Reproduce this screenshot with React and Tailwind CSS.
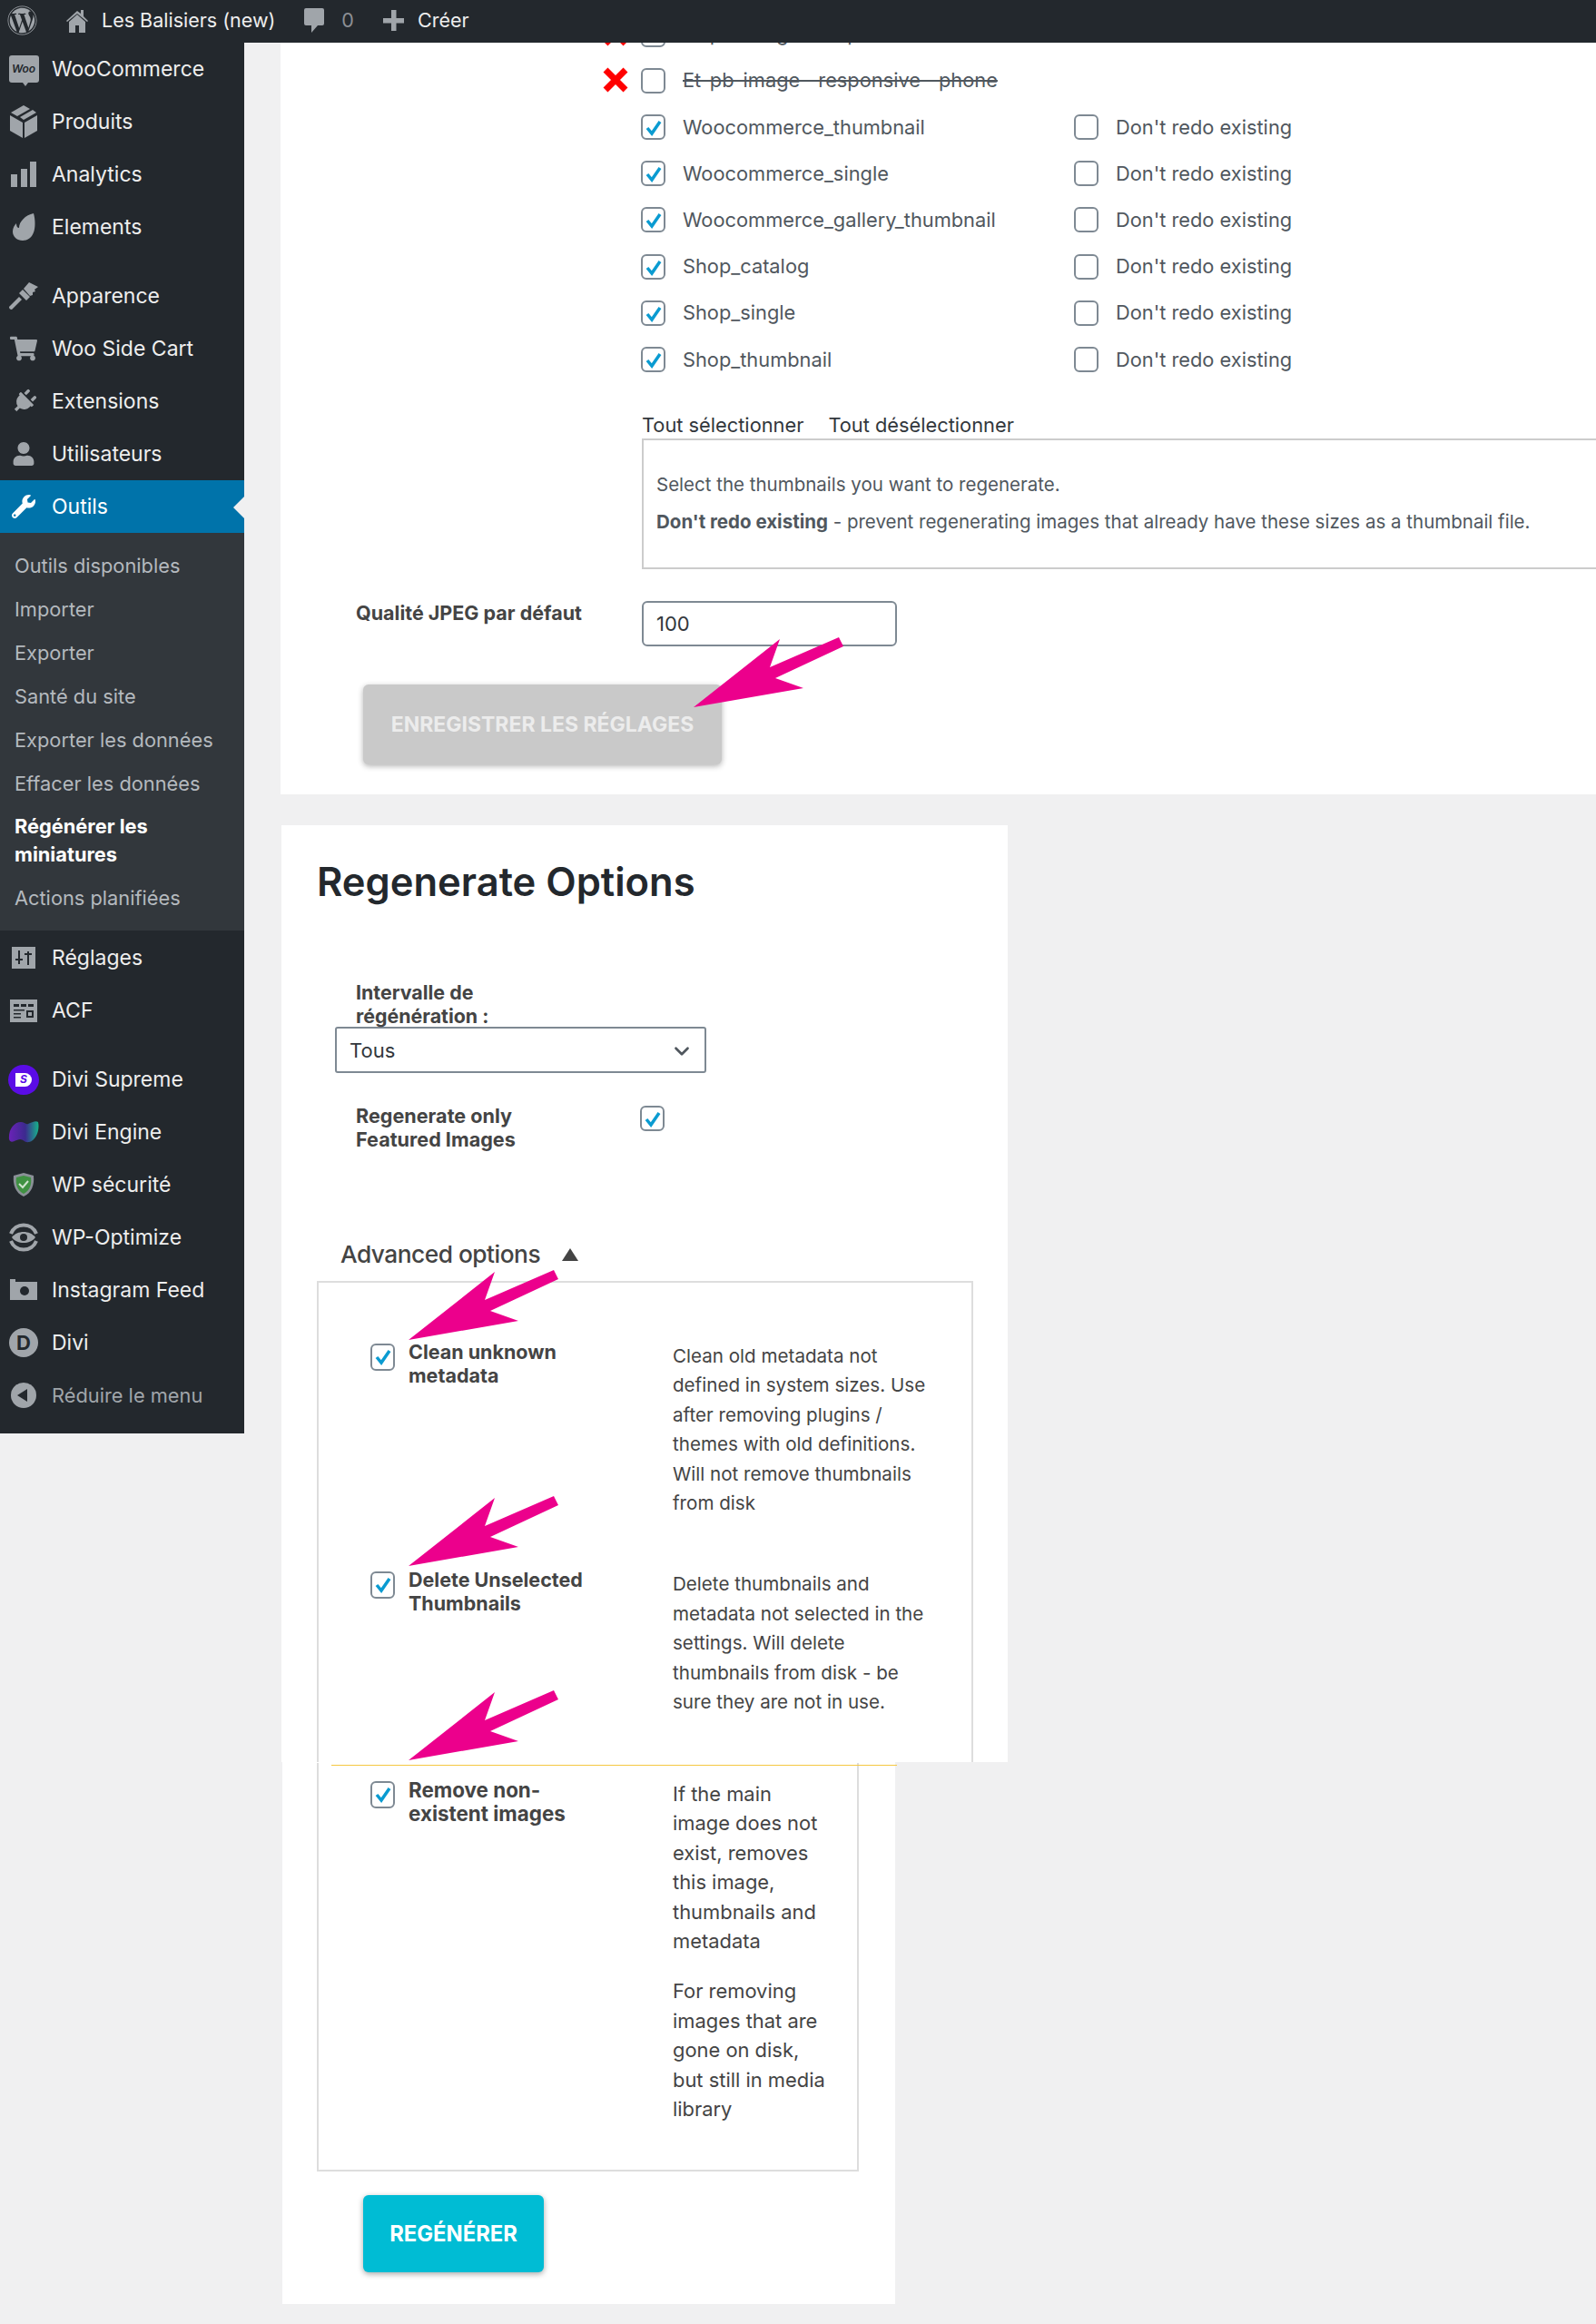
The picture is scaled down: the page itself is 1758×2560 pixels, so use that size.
import { Fragment } from 'react';
import { FaWordpress, FaWrench, FaPlug, FaUser, FaShoppingCart } from 'react-icons/fa';
import { ChevronDown } from 'lucide-react';

const Bars = () => (
  <svg width="28" height="30" viewBox="0 0 28 30" fill="#a0a5aa"><rect x="0" y="15" width="7" height="14" /><rect x="11" y="9" width="7" height="20" /><rect x="21" y="1" width="7" height="28" /></svg>
);

const BoxIcon = () => (
  <svg width="30" height="36" viewBox="0 0 30 36" fill="#a0a5aa">
    <polygon points="0,11 14,19 14,36 0,28" />
    <polygon points="30,11 16,19 16,36 30,28" />
    <polygon points="15,0 22,4 8,12 1,8" />
    <polygon points="25,5 29,8 15,16 11,13" />
  </svg>
);

const Flame = () => (
  <svg width="26" height="30" viewBox="0 0 26 30" fill="#a0a5aa"><path d="M24 0c2 7 2 16 0 21-2 6-7 9-12 9C6 30 1 26 1 20c0-4 2-7 4-9 0 3 1 5 3 5C8 9 15 2 24 0z" /></svg>
);

const Brush = () => (
  <svg width="32" height="30" viewBox="0 0 32 30" fill="#a0a5aa"><path d="M0 27l11-11 3 3L3 30c-2 0-3-1-3-3z" /><path d="M11 12l4-4 8 8-4 4z" /><path d="M16 7l6-7 10 5-4 3 1 2-3 1 0 3-3 1z" /></svg>
);

const Sliders = () => (
  <svg width="26" height="24" viewBox="0 0 26 24"><rect width="26" height="24" fill="#a0a5aa" /><path d="M8 4v15M4 14h8M18 5v15M14 8h8" stroke="#23282d" strokeWidth="2" /></svg>
);

const AcfIcon = () => (
  <svg width="30" height="25" viewBox="0 0 30 25"><rect width="30" height="25" fill="#a0a5aa" /><path d="M4 5h6v3H4zM12 5h6v3h-6zM20 5h6v3h-6zM4 11h12v1.500H4zM4 15h8v1.500H4zM4 19h8v1.500H4zM18 12h8v8h-8z" fill="#23282d" /><rect x="20" y="14" width="4" height="4" fill="#a0a5aa" /></svg>
);

const DiviSupreme = () => (
  <div className="w-[34px] h-[33px] rounded-full bg-[#5a0ce6] flex items-center justify-center">
    <div className="w-[18px] h-[15px] bg-white rounded-r-full flex items-center justify-center text-[#5a0ce6] text-[12px] font-bold italic leading-none">S</div>
  </div>
);

const DiviEngine = () => (
  <svg width="34" height="24" viewBox="0 0 34 24">
    <defs>
      <linearGradient id="engine" x1="0" x2="1" y1="0" y2="0">
        <stop offset="0" stopColor="#6a22b8" />
        <stop offset="0.55" stopColor="#3c2a8e" />
        <stop offset="1" stopColor="#17b38a" />
      </linearGradient>
    </defs>
    <path d="M1 20C0 10 6 1 14 1c4 0 5 3 8 2 4-2 9-4 11-2 2 8-2 20-10 22-5 1-6-3-10-3-4 0-10 6-12 0z" fill="url(#engine)" />
  </svg>
);

const Shield = () => (
  <svg width="24" height="26" viewBox="0 0 24 26"><path d="M12 0l11 3c1 10-2 19-11 23C3 22 0 13 1 3z" fill="#8a9097" /><path d="M12 3l8 2c1 8-1 14-8 18C5 19 3 13 4 5z" fill="#3f9142" /><path d="M7 12l4 4 6-7" fill="none" stroke="#cfe3cf" strokeWidth="2" /></svg>
);

const Optimize = () => (
  <svg width="34" height="34" viewBox="0 0 34 34" fill="none" stroke="#a0a5aa" strokeWidth="4">
    <path d="M3 13A15 15 0 0 1 31 13" />
    <path d="M3 21A15 15 0 0 0 31 21" />
    <path d="M4 17C10 9 24 9 30 17C24 25 10 25 4 17z" fill="#a0a5aa" stroke="none" />
    <circle cx="17" cy="17" r="4" fill="#23282d" stroke="none" />
  </svg>
);

const Camera = () => (
  <svg width="30" height="24" viewBox="0 0 30 24"><path d="M0 0h6v3h24v20H0z" fill="#a0a5aa" /><rect x="7" y="0" width="3" height="3" fill="#23282d" /><circle cx="16" cy="13" r="5" fill="#23282d" /></svg>
);

const DiviLogo = () => (
  <div className="w-[32px] h-[32px] rounded-full bg-[#a0a5aa] flex items-center justify-center text-[#23282d] text-[22px] font-bold leading-none">D</div>
);

const Collapse = () => (
  <svg width="28" height="28" viewBox="0 0 28 28"><circle cx="14" cy="14" r="14" fill="#a0a5aa" /><polygon points="7,14 18,7 18,21" fill="#23282d" /></svg>
);

const Home = () => (
  <svg width="26" height="27" viewBox="0 0 26 27" fill="#a0a5aa"><path d="M13 3L1 14l1 1L13 6l11 9 1-1-5-5V2h-3v4z" /><path d="M4 15l9-8 9 8v12h-7v-8h-4v8H4z" /></svg>
);

const Comment = () => (
  <svg width="24" height="29" viewBox="0 0 24 29" fill="#a0a5aa"><path d="M3 1h18a2 2 0 0 1 2 2v15a2 2 0 0 1-2 2h-5l-7 8v-8H3a2 2 0 0 1-2-2V3a2 2 0 0 1 2-2z" /></svg>
);

const Plus = () => (
  <svg width="23" height="23" viewBox="0 0 23 23" fill="#a0a5aa"><rect x="9" y="0" width="5.500" height="23" /><rect x="0" y="9" width="23" height="5.500" /></svg>
);

const WooIcon = () => (
  <div className="relative w-[33px] h-[30px] rounded-[3px] bg-[#a0a5aa] flex items-center justify-center text-[#23282d] text-[12px] italic font-semibold leading-none">
    Woo
    <div className="absolute -bottom-[4px] left-[15px] w-0 h-0 border-x-[3px] border-t-[4px] border-x-transparent border-t-[#a0a5aa]" />
  </div>
);

const topMenu1 = [
  { label: 'WooCommerce', icon: <WooIcon /> },
  { label: 'Produits', icon: <BoxIcon /> },
  { label: 'Analytics', icon: <Bars /> },
  { label: 'Elements', icon: <Flame /> },
];
const topMenu2 = [
  { label: 'Apparence', icon: <Brush /> },
  { label: 'Woo Side Cart', icon: <FaShoppingCart size={30} color="#a0a5aa" /> },
  { label: 'Extensions', icon: <FaPlug size={27} color="#a0a5aa" className="rotate-45" /> },
  { label: 'Utilisateurs', icon: <FaUser size={26} color="#a0a5aa" /> },
];
const submenu = ['Outils disponibles', 'Importer', 'Exporter', 'Santé du site', 'Exporter les données', 'Effacer les données'];
const topMenu3 = [
  { label: 'Réglages', icon: <Sliders /> },
  { label: 'ACF', icon: <AcfIcon /> },
];
const topMenu4 = [
  { label: 'Divi Supreme', icon: <DiviSupreme /> },
  { label: 'Divi Engine', icon: <DiviEngine /> },
  { label: 'WP sécurité', icon: <Shield /> },
  { label: 'WP-Optimize', icon: <Optimize /> },
  { label: 'Instagram Feed', icon: <Camera /> },
  { label: 'Divi', icon: <DiviLogo /> },
];

const sizes = ['Woocommerce_thumbnail', 'Woocommerce_single', 'Woocommerce_gallery_thumbnail', 'Shop_catalog', 'Shop_single', 'Shop_thumbnail'];

const MenuRow = ({ item }) => (
  <div className="h-[58px] flex items-center text-[#eeeeee] text-[23px]">
    <div className="w-[52px] mr-[5px] flex justify-center">{item.icon}</div>
    <span>{item.label}</span>
  </div>
);

const Check = ({ checked = true, className = 'w-[27px] h-[28px]' }) => (
  <div className={`relative shrink-0 rounded-md border-2 border-[#7e8993] bg-white ${className}`}>
    {checked && (
      <svg className="absolute left-[3px] top-[4px]" width="18" height="18" viewBox="0 0 18 18" fill="none">
        <path d="M2 9l5 6L16 2" stroke="#0a9bd1" strokeWidth="3.500" />
      </svg>
    )}
  </div>
);

const RedX = ({ className }) => (
  <svg className={className} width="28" height="28" viewBox="0 0 28 28" fill="none">
    <path d="M3 3l22 22M25 3L3 25" stroke="#ff0000" strokeWidth="7" />
  </svg>
);

const Arrow = ({ className }) => (
  <svg className={`absolute ${className}`} width="165" height="77" viewBox="0 0 165 77" fill="#ec008c">
    <polygon points="0,77 95,2 84,33 160,0 165,10 90,45 121,56" />
  </svg>
);

const Lines = ({ lines }) => lines.map((line) => (
  <Fragment key={line}>{line}<br /></Fragment>
));

const Option = ({ title, desc, className = '', titleSize = 'text-[21.500px]', descSize = 'text-[20.600px]' }) => (
  <div className={`flex text-[#444444] ${className}`}>
    <Check className="w-[27px] h-[30px] mt-[3px]" />
    <div className={`w-[306px] shrink-0 pl-[15px] font-bold leading-[25.500px] ${titleSize}`}><Lines lines={title} /></div>
    <div className={`pt-px whitespace-nowrap leading-[32.400px] ${descSize}`}>{desc}</div>
  </div>
);

export default function App() {
  return (
    <div className="min-h-[2560px] bg-[#f0f0f1] [font-family:Inter,sans-serif] antialiased">
      {/* Admin bar */}
      <div className="h-[47px] pb-[2px] bg-[#23282d] flex items-center text-[#eeeeee] text-[21.500px]">
        <FaWordpress size={33} color="#a0a5aa" className="ml-[8px]" />
        <div className="ml-[31px]"><Home /></div>
        <span className="ml-[14px]">Les Balisiers (new)</span>
        <div className="ml-[31px]"><Comment /></div>
        <span className="ml-[18px] text-[#8c8f94]">0</span>
        <div className="ml-[32px]"><Plus /></div>
        <span className="ml-[15px]">Créer</span>
      </div>

      <div className="flex items-start">
        {/* Sidebar */}
        <div className="w-[269px] shrink-0 bg-[#23282d] pb-[13px]">
          {topMenu1.map((item) => <MenuRow key={item.label} item={item} />)}
          <div className="h-[18px]" />
          {topMenu2.map((item) => <MenuRow key={item.label} item={item} />)}
          <div className="relative h-[58px] bg-[#0073aa] flex items-center text-white text-[23px]">
            <div className="w-[52px] mr-[5px] flex justify-center"><FaWrench size={26} color="#ffffff" /></div>
            <span>Outils</span>
            <div className="absolute right-0 top-[18px] w-0 h-0 border-y-[12px] border-r-[12px] border-y-transparent border-r-[#f0f0f1]" />
          </div>
          <div className="bg-[#32373c] py-[12px] text-[#b4b9be] text-[21.800px]">
            {submenu.map((label) => (
              <div key={label} className="h-[48px] flex items-center pl-[16px]">{label}</div>
            ))}
            <div className="pl-[16px] pr-[20px] py-[8px] font-bold text-white leading-[31px]">Régénérer les miniatures</div>
            <div className="h-[48px] flex items-center pl-[16px]">Actions planifiées</div>
          </div>
          <div className="h-px" />
          {topMenu3.map((item) => <MenuRow key={item.label} item={item} />)}
          <div className="h-[18px]" />
          {topMenu4.map((item) => <MenuRow key={item.label} item={item} />)}
          <div className="h-[58px] flex items-center text-[#a0a5aa] text-[21.800px]">
            <div className="w-[52px] mr-[5px] flex justify-center"><Collapse /></div>
            <span>Réduire le menu</span>
          </div>
        </div>

        {/* Main column */}
        <div className="flex-1 min-w-0 pl-[40px]">
          {/* Thumbnail settings */}
          <div className="relative h-[828px] bg-white overflow-hidden">
            <div className="relative ml-[397px] -mt-[35px]">
              {['Et-pb-image--responsive--tablet', 'Et-pb-image--responsive--phone'].map((label) => (
                <div key={label} className="relative h-[51.200px] flex items-center">
                  <RedX className="absolute -left-[42px] top-[11px]" />
                  <Check checked={false} />
                  <span className="ml-[19px] line-through text-[#50575e] text-[21.800px]">{label}</span>
                </div>
              ))}
              {sizes.map((label) => (
                <div key={label} className="h-[51.200px] flex items-center text-[#50575e] text-[21.800px]">
                  <Check />
                  <span className="ml-[19px] w-[431px]">{label}</span>
                  <Check checked={false} />
                  <span className="ml-[19px]">Don't redo existing</span>
                </div>
              ))}
            </div>

            <div className="ml-[398px] mt-[31px] flex text-[#32373c] text-[21.800px] leading-[30px]">
              <span>Tout sélectionner</span>
              <span className="ml-[27px]">Tout désélectionner</span>
            </div>
            <div className="ml-[398px] h-[144px] border-2 border-r-0 border-[#cccccc] pl-[14px] pt-[34px] text-[#50575e] text-[20.500px] leading-[30px]">
              <p>Select the thumbnails you want to regenerate.</p>
              <p className="mt-[11px]"><b>Don't redo existing</b> - prevent regenerating images that already have these sizes as a thumbnail file.</p>
            </div>

            <div className="mt-[35px] flex items-start">
              <div className="ml-[83px] w-[315px] font-bold text-[#444444] text-[21.500px] leading-[26px]">Qualité JPEG par défaut</div>
              <div className="w-[281px] h-[50px] pt-[2px] rounded-md border-2 border-[#7e8993] flex items-center pl-[14px] text-[#32373c] text-[22px]">100</div>
            </div>

            <div className="ml-[91px] mt-[42px] w-[395px] h-[88px] pt-[2px] rounded-md bg-[#c9c9c9] shadow-[0_2px_6px_rgba(0,0,0,0.3)] flex items-center justify-center font-bold text-[#ececec] text-[23px]">
              ENREGISTRER LES RÉGLAGES
            </div>

            <Arrow className="left-[455px] top-[655px]" />
          </div>

          {/* Regenerate options */}
          <div className="relative ml-px mt-[34px] w-[800px] h-[1032px] bg-white">
            <h2 className="pt-[34px] ml-[39px] font-semibold text-[#23282d] text-[43.500px] leading-[56px]">Regenerate Options</h2>

            <div className="ml-[82px] mt-[81px] w-[210px] font-bold text-[#444444] text-[21.400px] leading-[26px]">Intervalle de régénération :</div>
            <div className="ml-[59px] -mt-px w-[409px] h-[51px] pt-[2px] rounded-[3px] border-2 border-[#7e8993] flex items-center justify-between pl-[14px] pr-[12px] text-[#32373c] text-[22px]">
              Tous
              <ChevronDown size={26} strokeWidth={2.500} color="#50575e" />
            </div>

            <div className="mt-[34px] flex items-start">
              <div className="ml-[82px] w-[313px] font-bold text-[#444444] text-[21.600px] leading-[26px]">Regenerate only<br />Featured Images</div>
              <Check className="w-[27px] h-[28px] mt-[2px]" />
            </div>

            <div className="ml-[65px] mt-[96px] flex items-center text-[#444444] text-[26.300px] leading-[36px] font-medium tracking-[-0.5px]">
              Advanced options
              <div className="ml-[24px] w-0 h-0 border-x-[9px] border-b-[14px] border-x-transparent border-b-[#444444]" />
            </div>

            <div className="ml-[39px] mt-[11px] w-[723px] h-[530px] border-2 border-b-0 border-[#dddddd] pl-[57px] pt-[64px]">
              <Option
                title={['Clean unknown', 'metadata']}
                desc={<Lines lines={['Clean old metadata not', 'defined in system sizes. Use', 'after removing plugins /', 'themes with old definitions.', 'Will not remove thumbnails', 'from disk']} />}
              />
              <Option
                className="mt-[56px]"
                title={['Delete Unselected', 'Thumbnails']}
                desc={<Lines lines={['Delete thumbnails and', 'metadata not selected in the', 'settings. Will delete', 'thumbnails from disk - be', 'sure they are not in use.']} />}
              />
            </div>

            <Arrow className="left-[140px] top-[490px]" />
            <Arrow className="left-[140px] top-[739px]" />
            <Arrow className="left-[140px] top-[953px]" />
          </div>

          {/* Continuation of the options panel */}
          <div className="relative ml-[2px] w-[675px] h-[597px] bg-white pt-px">
            <div className="absolute left-[54px] top-[3px] w-[623px] h-[1px] bg-[#f5c842]" />
            <div className="ml-[38px] w-[597px] h-[450px] border-2 border-t-0 border-[#dddddd] pl-[57px] pt-[17px]">
              <Option
                titleSize="text-[22.400px]"
                descSize="text-[21.900px]"
                title={['Remove non-', 'existent images']}
                desc={<>
                  <p><Lines lines={['If the main', 'image does not', 'exist, removes', 'this image,', 'thumbnails and', 'metadata']} /></p>
                  <p className="mt-[23px]"><Lines lines={['For removing', 'images that are', 'gone on disk,', 'but still in media', 'library']} /></p>
                </>}
              />
            </div>
            <div className="ml-[89px] mt-[26px] w-[199px] h-[85px] rounded-md bg-[#00bcd4] shadow-[0_2px_6px_rgba(0,0,0,0.35)] flex items-center justify-center font-bold text-white text-[23.800px]">
              REGÉNÉRER
            </div>
          </div>
        </div>
      </div>
    </div>
  );
}
